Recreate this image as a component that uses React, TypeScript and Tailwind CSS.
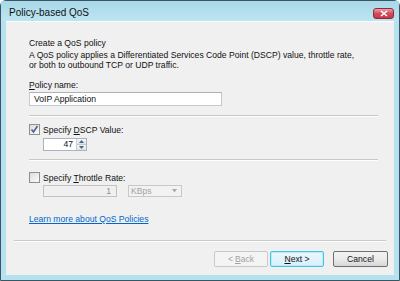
import React from "react";

const font = { fontFamily: '"Liberation Sans", Arial, sans-serif' };

function Sep({ className = "" }: { className?: string }) {
  return (
    <div className={"h-[2px] border-t border-[#c9c9c9] border-b border-b-[#fdfdfd] " + className} />
  );
}

function Check({ checked }: { checked: boolean }) {
  return (
    <div className="w-[11px] h-[11px] border border-[#8f8f8f] bg-gradient-to-br from-[#dcdcdc] to-[#fbfbfb] flex items-center justify-center">
      {checked && (
        <svg width="9" height="9" viewBox="0 0 9 9">
          <path d="M1.5 4.5 L3.5 7 L7.5 1" stroke="#4a5f97" strokeWidth="1.6" fill="none" />
        </svg>
      )}
    </div>
  );
}

export default function App() {
  return (
    <div style={font} className="w-[400px] h-[281px] bg-[#b6e1ee] border border-[#3a5563] rounded-t-[6px] flex flex-col text-[8.6px] leading-[10px] text-[#111]">
      {/* Title bar */}
      <div className="h-[20px] flex items-center pl-[8px] pr-[5px] bg-gradient-to-b from-[#a9d8e8] to-[#bce5f1]">
        <span className="text-[10px] text-[#111] pt-[4px]">Policy-based QoS</span>
        <div className="ml-auto mt-[4px] w-[21px] h-[11px] rounded-[3px] border border-[#8a2f3a] bg-gradient-to-b from-[#e7a0aa] via-[#d44a5c] to-[#c8384c] flex items-center justify-center">
          <svg width="8" height="7" viewBox="0 0 8 7">
            <path d="M1 1 L7 6 M7 1 L1 6" stroke="#fff" strokeWidth="1.6" />
          </svg>
        </div>
      </div>
      {/* Client */}
      <div className="flex-1 mx-[5px] mb-[5px] bg-[#f0f0f0] border-t border-[#fdfdfd] flex flex-col">
        <div className="pl-[23px] pr-[16px] flex flex-col">
          <div className="mt-[16px]">Create a QoS policy</div>
          <div className="mt-[2px] whitespace-nowrap">A QoS policy applies a Differentiated Services Code Point (DSCP) value, throttle rate,</div>
          <div>or both to outbound TCP or UDP traffic.</div>
          <div className="mt-[10px]"><span className="underline">P</span>olicy name:</div>
          <div className="mt-[2px] w-[193px] h-[14px] bg-white border border-[#c4cbd3] border-t-[#aab2bb] flex items-center pl-[4px]">VoIP Application</div>
          <Sep className="mt-[9px]" />
          <div className="mt-[7px] flex items-center gap-[3px] h-[11px]">
            <Check checked />
            <span>Specify <span className="underline">D</span>SCP Value:</span>
          </div>
          <div className="mt-[3px] ml-[14px] w-[44px] h-[13px] bg-white border border-[#aab2bb] flex">
            <div className="flex-1 text-right pr-[3px] leading-[11px]">47</div>
            <div className="w-[10px] flex flex-col border-l border-[#c8d0d8]">
              <div className="flex-1 bg-gradient-to-b from-[#f5f7f9] to-[#dde3e9] border-b border-[#c0c8d0] flex items-center justify-center">
                <svg width="5" height="3" viewBox="0 0 5 3"><path d="M0 3 L2.5 0 L5 3Z" fill="#4d6185" /></svg>
              </div>
              <div className="flex-1 bg-gradient-to-b from-[#f5f7f9] to-[#dde3e9] flex items-center justify-center">
                <svg width="5" height="3" viewBox="0 0 5 3"><path d="M0 0 L2.5 3 L5 0Z" fill="#4d6185" /></svg>
              </div>
            </div>
          </div>
          <Sep className="mt-[8px]" />
          <div className="mt-[11px] flex items-center gap-[3px] h-[11px]">
            <Check checked={false} />
            <span>Specify <span className="underline">T</span>hrottle Rate:</span>
          </div>
          <div className="mt-[2px] ml-[14px] flex items-center gap-[11px]">
            <div className="w-[74px] h-[12px] bg-[#f0f0f0] border border-[#c2c2c2] text-right pr-[5px] text-[#8d8d8d] leading-[10px]">1</div>
            <div className="w-[54px] h-[12px] bg-[#f2f2f2] border border-[#c9c9c9] flex items-center pl-[2px] text-[#a3a3a3]">
              <span className="flex-1 leading-[10px]">KBps</span>
              <svg width="9" height="4" viewBox="0 0 9 4" className="mr-[2px]"><path d="M2 0 L4.5 3.5 L7 0Z" fill="#a8a8a8" /></svg>
            </div>
          </div>
          <div className="mt-[17px] text-[#0066cc] underline">Learn more about QoS Policies</div>
        </div>
        <Sep className="mt-[16px] mx-[8px]" />
        <div className="mt-[9px] pr-[6px] flex justify-end">
          <div className="w-[54px] h-[16px] rounded-[2px] border border-[#c8c8c8] bg-[#f4f4f4] text-[#a3a3a3] flex items-center justify-center">
            &lt; <span className="underline ml-[2px]">B</span>ack
          </div>
          <div className="ml-[2px] w-[54px] h-[16px] rounded-[2px] border border-[#3fc6e0] bg-gradient-to-b from-[#eaf6fd] to-[#d9f0fc] flex items-center justify-center shadow-[inset_0_0_0_1px_#bfeaf5]">
            <span className="underline">N</span>ext &gt;
          </div>
          <div className="ml-[9px] w-[55px] h-[16px] rounded-[2px] border border-[#707070] bg-gradient-to-b from-[#f2f2f2] via-[#ebebeb] to-[#d6d6d6] flex items-center justify-center">
            Cancel
          </div>
        </div>
      </div>
    </div>
  );
}
